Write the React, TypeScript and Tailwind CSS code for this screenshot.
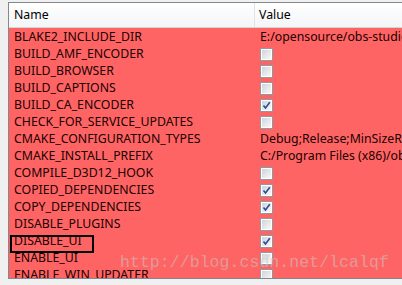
const rows: { name: string; value?: string; check?: boolean }[] = [
  { name: "BLAKE2_INCLUDE_DIR", value: "E:/opensource/obs-studio" },
  { name: "BUILD_AMF_ENCODER", check: false },
  { name: "BUILD_BROWSER", check: false },
  { name: "BUILD_CAPTIONS", check: false },
  { name: "BUILD_CA_ENCODER", check: true },
  { name: "CHECK_FOR_SERVICE_UPDATES", check: false },
  { name: "CMAKE_CONFIGURATION_TYPES", value: "Debug;Release;MinSizeRel" },
  { name: "CMAKE_INSTALL_PREFIX", value: "C:/Program Files (x86)/obs" },
  { name: "COMPILE_D3D12_HOOK", check: false },
  { name: "COPIED_DEPENDENCIES", check: true },
  { name: "COPY_DEPENDENCIES", check: true },
  { name: "DISABLE_PLUGINS", check: false },
  { name: "DISABLE_UI", check: true },
  { name: "ENABLE_UI", check: false },
  { name: "ENABLE_WIN_UPDATER", check: false },
];

function Check({ on }: { on: boolean }) {
  return (
    <div className="w-[13px] h-[13px] border border-[#8e9aa3] bg-white p-px">
      <div className="w-full h-full bg-gradient-to-br from-[#d0d4d8] to-[#f8f8f8] relative">
        {on && (
          <svg viewBox="0 0 9 9" className="absolute inset-0 w-[9px] h-[9px]">
            <path d="M1.5 4.5 L3.5 7 L7.8 1.2" fill="none" stroke="#2b4a9c" strokeWidth="1.6" />
          </svg>
        )}
      </div>
    </div>
  );
}

export default function App() {
  return (
    <div
      className="w-[402px] h-[285px] bg-[#f0f0f0] overflow-hidden pt-[2px] pl-[8px]"
      style={{ fontFamily: '"Noto Sans", sans-serif' }}
    >
      <div className="relative h-[277px] border-l border-t border-b border-[#828790] bg-white overflow-hidden w-[394px]">
        <div className="flex h-[25px] bg-gradient-to-b from-white to-[#f4f5f7] border-b border-[#d5d5d5] text-[12.3px] text-black">
          <div className="w-[246px] shrink-0 border-r border-[#e2e3e5] pl-[5px] flex items-center">Name</div>
          <div className="pl-[4px] flex items-center">Value</div>
        </div>
        <div className="bg-[#ff6464] text-[12.3px] text-[#1a0000] pt-px">
          {rows.map((r) => (
            <div key={r.name} className="flex h-[17px] items-center">
              <div className="w-[247px] shrink-0 pl-[5px] whitespace-nowrap leading-none">{r.name}</div>
              <div className="pl-[4px] whitespace-nowrap leading-none">
                {r.check === undefined ? r.value : <Check on={r.check} />}
              </div>
            </div>
          ))}
        </div>
        <div className="absolute left-[1px] top-[232px] w-[84px] h-[18px] border-2 border-black" />
        <div
          className="absolute left-[111px] top-[248px] text-[16.6px] text-[rgba(200,200,200,0.55)] whitespace-nowrap"
          style={{ fontFamily: '"Liberation Mono", monospace' }}
        >
          http://blog.csdn.net/lcalqf
        </div>
      </div>
    </div>
  );
}
